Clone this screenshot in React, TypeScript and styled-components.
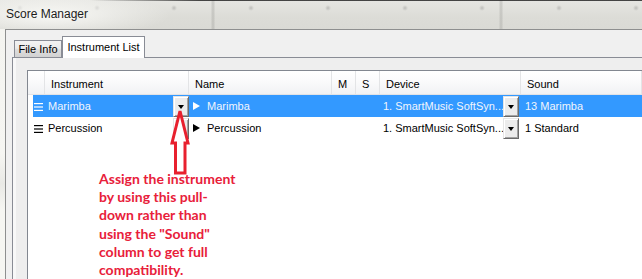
import React from "react";
import styled, { createGlobalStyle } from "styled-components";

const GlobalStyle = createGlobalStyle`
  html, body { margin: 0; padding: 0; background: #f0f0f0; }
  #root { width: 642px; height: 279px; }
`;

const UI_FONT = `"Liberation Sans", Arial, sans-serif`;
const SELECT_BLUE = "#3399ff";

const Window = styled.div`
  width: 642px;
  height: 279px;
  overflow: hidden;
  display: flex;
  flex-direction: column;
  font-family: ${UI_FONT};
  font-size: 11px;
  color: #000;
  background: #f2f2ee;
`;

const TitleBar = styled.div`
  height: 29px;
  flex: none;
  display: flex;
  align-items: center;
  padding-left: 6px;
  box-sizing: border-box;
  padding-bottom: 1px;
  background:
    linear-gradient(to right, rgba(40, 40, 40, 0) 0px, rgba(40, 40, 40, 0) 90px, rgba(40, 40, 40, 0.85) 200px) top / 100% 1px no-repeat,
    radial-gradient(ellipse 120px 22px at 50px 15px, rgba(250, 250, 247, 0.95), rgba(250, 250, 247, 0)),
    radial-gradient(circle 3px at 38px 8px, rgba(120, 120, 120, 0.35), rgba(120, 120, 120, 0)) 213px 0 / 77px 29px repeat-x,
    repeating-linear-gradient(
      to right,
      rgba(0, 0, 0, 0) 0px,
      rgba(0, 0, 0, 0) 211px,
      rgba(150, 150, 146, 0.3) 212px,
      rgba(150, 150, 146, 0.3) 214px,
      rgba(0, 0, 0, 0) 215px,
      rgba(0, 0, 0, 0) 288px
    ),
    linear-gradient(to bottom, #e6e6e2, #dcdcd7 60%, #dadad5);
`;

const TitleText = styled.span`
  font-family: ${UI_FONT};
  font-size: 12px;
  color: #1c1c1c;
`;

const Body = styled.div`
  flex: 1;
  display: flex;
  min-height: 0;
`;

const FrameEdge = styled.div`
  width: 5px;
  flex: none;
  background: linear-gradient(to bottom, #f4f4f0, #f6f6f2 50%, #e9e9e5 62%, #f6f6f2 72%);
`;

const Client = styled.div`
  flex: 1;
  display: flex;
  flex-direction: column;
  border-left: 1px solid #8e8f8f;
  border-top: 1px solid #8e8f8f;
  background: #f0f0f0;
  padding-left: 6px;
  min-width: 0;
`;

const TabStrip = styled.div`
  height: 27px;
  flex: none;
  display: flex;
  align-items: flex-end;
  padding-left: 2px;
`;

const Tab = styled.div<{ $active?: boolean }>`
  box-sizing: border-box;
  display: flex;
  align-items: center;
  justify-content: center;
  border: 1px solid #898c95;
  border-bottom: none;
  font-size: 11px;
  color: #000;
  position: relative;
  z-index: ${(p) => (p.$active ? 1 : 0)};
  width: ${(p) => (p.$active ? "83px" : "48px")};
  height: ${(p) => (p.$active ? "22px" : "17px")};
  margin-bottom: ${(p) => (p.$active ? "-1px" : "0")};
  padding-bottom: ${(p) => (p.$active ? "1px" : "0")};
  background: ${(p) =>
    p.$active
      ? "#ffffff"
      : "linear-gradient(to bottom, #f3f3f3, #ebebeb 45%, #dddddd 55%, #d2d2d2)"};
`;

const Panel = styled.div`
  flex: 1;
  display: flex;
  flex-direction: column;
  border-left: 1px solid #898c95;
  border-top: 1px solid #898c95;
  background: linear-gradient(to right, #f8f8f8 0px, #f8f8f8 3px, #eeeeee 3px);
  padding: 12px 0 0 14px;
  min-height: 0;
`;

const List = styled.div`
  flex: 1;
  position: relative;
  border-left: 1px solid #828790;
  border-top: 1px solid #828790;
  background: #ffffff;
  min-height: 0;
`;

const HEADER_COLS = "17px 144px 143px 24px 24px 141px 1fr";
const ROW_COLS = "12px 144px 143px 24px 24px 141px 1fr";

const Header = styled.div`
  display: grid;
  grid-template-columns: ${HEADER_COLS};
  height: 24px;
  box-sizing: border-box;
  border-bottom: 1px solid #e2e3e6;
  background: linear-gradient(to bottom, #ffffff 0%, #fbfbfc 40%, #f1f2f4 100%);
`;

const HeaderCell = styled.div`
  display: flex;
  align-items: center;
  padding: 2px 0 0 6px;
  border-right: 1px solid #e3e4e6;
  white-space: nowrap;
  overflow: hidden;
  color: #000;
`;

const Row = styled.div<{ $selected?: boolean }>`
  display: grid;
  grid-template-columns: ${ROW_COLS};
  height: 22px;
  margin-left: 5px;
  background: ${(p) => (p.$selected ? SELECT_BLUE : "transparent")};
  color: ${(p) => (p.$selected ? "#f1f5fc" : "#000")};
`;

const Cell = styled.div<{ $pad?: number }>`
  display: flex;
  align-items: center;
  padding-left: ${(p) => p.$pad ?? 0}px;
  min-width: 0;
  white-space: nowrap;
`;

const CellText = styled.span`
  flex: 1;
  overflow: hidden;
  white-space: nowrap;
  min-width: 0;
`;

const DropButton = styled.div<{ $right?: number }>`
  box-sizing: border-box;
  flex: none;
  width: 16px;
  height: 21px;
  align-self: flex-end;
  margin-right: ${(p) => p.$right ?? 0}px;
  display: flex;
  align-items: center;
  justify-content: center;
  background: #ececec;
  border: 1px solid;
  border-color: #e6e6e6 #6b6b6b #6b6b6b #e6e6e6;
  box-shadow: inset 1px 1px #ffffff, inset -1px -1px #a3a3a3;
`;

const DownArrow = styled.span`
  width: 0;
  height: 0;
  border-left: 3.5px solid transparent;
  border-right: 3.5px solid transparent;
  border-top: 4px solid #000;
  margin-top: 1px;
`;

const PlayArrow = styled.span<{ $light?: boolean }>`
  flex: none;
  width: 0;
  height: 0;
  border-top: 4px solid transparent;
  border-bottom: 4px solid transparent;
  border-left: 7px solid ${(p) => (p.$light ? "#ffffff" : "#000000")};
  margin-right: 7px;
`;

const Annotation = styled.div`
  margin: 31px 0 0 71px;
  font-family: "Lato", "Open Sans", sans-serif;
  font-weight: 700;
  font-size: 14px;
  line-height: 18.2px;
  color: #e8203a;
  width: 170px;
`;

const ArrowOverlay = styled.svg`
  position: absolute;
  left: 142px;
  top: 37px;
  overflow: visible;
`;

function HandleIcon({ light }: { light?: boolean }) {
  const c = light ? "#ffffff" : "#000000";
  return (
    <svg width="9" height="9" viewBox="0 0 9 9">
      <rect x="0" y="1" width="9" height="1.2" fill={c} />
      <rect x="0" y="4.4" width="9" height="1.2" fill={c} />
      <rect x="0" y="7.8" width="9" height="1.2" fill={c} />
    </svg>
  );
}

type Track = {
  instrument: string;
  name: string;
  device: string;
  sound: string;
  selected?: boolean;
};

const tracks: Track[] = [
  {
    instrument: "Marimba",
    name: "Marimba",
    device: "1. SmartMusic SoftSyn...",
    sound: "13 Marimba",
    selected: true,
  },
  {
    instrument: "Percussion",
    name: "Percussion",
    device: "1. SmartMusic SoftSyn...",
    sound: "1 Standard",
  },
];

const headers = ["", "Instrument", "Name", "M", "S", "Device", "Sound"];

export default function App() {
  return (
    <>
      <GlobalStyle />
      <Window>
        <TitleBar>
          <TitleText>Score Manager</TitleText>
        </TitleBar>
        <Body>
          <FrameEdge />
          <Client>
            <TabStrip>
              <Tab>File Info</Tab>
              <Tab $active>Instrument List</Tab>
            </TabStrip>
            <Panel>
              <List>
                <Header>
                  {headers.map((h, i) => (
                    <HeaderCell key={i}>{h}</HeaderCell>
                  ))}
                </Header>
                {tracks.map((t, i) => (
                  <Row key={i} $selected={t.selected}>
                    <Cell $pad={1}>
                      <HandleIcon light={t.selected} />
                    </Cell>
                    <Cell $pad={3}>
                      <CellText>{t.instrument}</CellText>
                      <DropButton>
                        <DownArrow />
                      </DropButton>
                    </Cell>
                    <Cell $pad={4}>
                      <PlayArrow $light={t.selected} />
                      <CellText>{t.name}</CellText>
                    </Cell>
                    <Cell />
                    <Cell />
                    <Cell $pad={3}>
                      <CellText>{t.device}</CellText>
                      <DropButton $right={2}>
                        <DownArrow />
                      </DropButton>
                    </Cell>
                    <Cell $pad={4}>
                      <CellText>{t.sound}</CellText>
                    </Cell>
                  </Row>
                ))}
                <Annotation>
                  Assign the instrument
                  <br />
                  by using this pull-
                  <br />
                  down rather than
                  <br />
                  using the "Sound"
                  <br />
                  column to get full
                  <br />
                  compatibility.
                </Annotation>
                <ArrowOverlay width="22" height="68" viewBox="0 0 22 68">
                  <polygon
                    points="10,3 2,35 5.5,35 5.5,65 15,65 15,35 18,35"
                    fill="#ffffff"
                    stroke="#e8202e"
                    strokeWidth="3"
                    strokeLinejoin="miter"
                  />
                </ArrowOverlay>
              </List>
            </Panel>
          </Client>
        </Body>
      </Window>
    </>
  );
}
